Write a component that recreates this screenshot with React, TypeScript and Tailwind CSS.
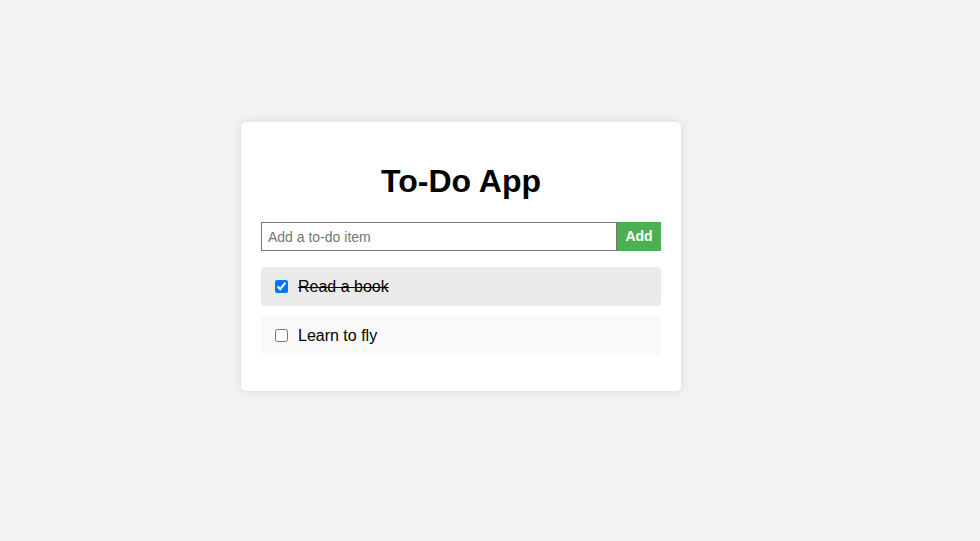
import { useState } from "react"

type Todo = {
  id: number
  text: string
  done: boolean
}

export default function App() {
  const [todos, setTodos] = useState<Todo[]>([
    { id: 1, text: "Read a book", done: true },
    { id: 2, text: "Learn to fly", done: false },
  ])
  const [value, setValue] = useState("")

  const addTodo = () => {
    if (!value.trim()) return
    setTodos([...todos, { id: Date.now(), text: value.trim(), done: false }])
    setValue("")
  }

  const toggle = (id: number) => {
    setTodos(todos.map((t) => (t.id === id ? { ...t, done: !t.done } : t)))
  }

  return (
    <div className="min-h-screen bg-[#f2f2f2] pt-[122px] pl-[241px] font-['Liberation_Sans',Arial,sans-serif] text-black">
      <div className="w-[440px] rounded-[5px] bg-white p-5 shadow-[0_0_10px_rgba(0,0,0,0.1)]">
        <h1 className="mt-[21px] mb-[22px] text-center text-[32px] leading-[37px] font-bold">To-Do App</h1>

        <div className="flex">
          <input
            type="text"
            value={value}
            onChange={(e) => setValue(e.target.value)}
            placeholder="Add a to-do item"
            className="h-[29px] flex-1 border border-[#767676] px-[6px] text-[14px] placeholder:text-[#757575] outline-none"
          />
          <button
            onClick={addTodo}
            className="h-[29px] w-[44px] bg-[#4caf50] text-[14px] font-bold text-white"
          >
            Add
          </button>
        </div>

        <ul className="mt-4 mb-4">
          {todos.map((todo) => (
            <li
              key={todo.id}
              className={`mb-[10px] flex items-center rounded-[4px] p-[10px] text-[16px] leading-[18px] last:mb-0 ${
                todo.done ? "bg-[#eaeaea]" : "bg-[#f9f9f9]"
              }`}
            >
              <input
                type="checkbox"
                checked={todo.done}
                onChange={() => toggle(todo.id)}
                className="mt-[3px] mr-[3px] mb-[3px] ml-[4px] h-[13px] w-[13px]"
              />
              <span className={`ml-[7px] ${todo.done ? "line-through" : ""}`}>{todo.text}</span>
            </li>
          ))}
        </ul>
      </div>
    </div>
  )
}
